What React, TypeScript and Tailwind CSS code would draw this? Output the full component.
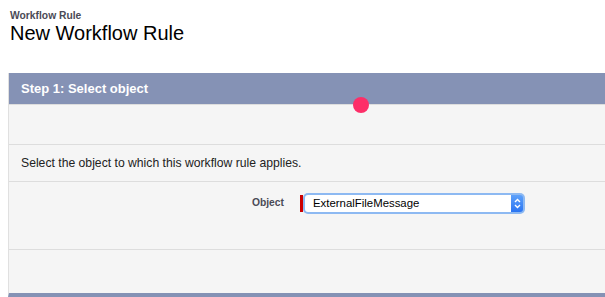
import React from 'react'

export default function App() {
  return (
    <div className="relative h-[297px] w-[605px] overflow-hidden bg-white font-['Liberation_Sans',Arial,sans-serif]">
      {/* Page title */}
      <div className="pl-[10px] pt-[9px]">
        <p className="text-[10.3px] font-bold leading-[13px] text-[#4a4a56]">Workflow Rule</p>
        <h1 className="text-[20px] leading-[22px] text-black">New Workflow Rule</h1>
      </div>

      {/* Step panel */}
      <div className="ml-[8px] mt-[29px] border-b-4 border-l border-[#8592b5] border-l-[#e0e0e0] bg-[#f5f5f5]">
        <div className="flex h-[32px] items-center border-b border-[#dddddd] bg-[#8592b5] pl-[12px]">
          <h2 className="text-[13px] font-bold text-white">Step 1: Select object</h2>
        </div>

        <div className="h-[40px] border-b border-[#dddddd]" />

        <div className="flex h-[37px] items-center border-b border-[#dddddd] pl-[12px]">
          <p className="text-[12.2px] text-[#222]">Select the object to which this workflow rule applies.</p>
        </div>

        <div className="h-[68px] border-b border-[#dddddd] pt-[11px]">
          <div className="flex items-start">
            <label className="w-[291px] pr-[16px] pt-[2px] text-right text-[10.3px] font-bold text-[#4a4a56]">
              Object
            </label>
            <div className="flex items-stretch">
              <div className="mt-[2px] h-[17px] w-[3px] bg-[#c00]" />
              <div className="flex h-[21px] w-[222px] rounded-[5px] bg-[#8db9f2] p-[2px]">
                <div className="flex flex-1 items-center rounded-l-[3px] bg-white pl-[8px] text-[11.4px] text-black">
                  ExternalFileMessage
                </div>
                <div className="flex w-[12px] items-center justify-center rounded-r-[3px] bg-gradient-to-b from-[#5ea1fa] to-[#2a74f2]">
                  <svg width="7" height="11" viewBox="0 0 7 11" fill="none" stroke="white" strokeWidth="1.4">
                    <path d="M1 4 L3.5 1.5 L6 4" />
                    <path d="M1 7 L3.5 9.5 L6 7" />
                  </svg>
                </div>
              </div>
            </div>
          </div>
        </div>

        <div className="h-[43px]" />
      </div>

      {/* touch indicator */}
      <div className="absolute left-[353px] top-[97px] h-[16px] w-[16px] rounded-full bg-[#fd2e68]" />
    </div>
  )
}
